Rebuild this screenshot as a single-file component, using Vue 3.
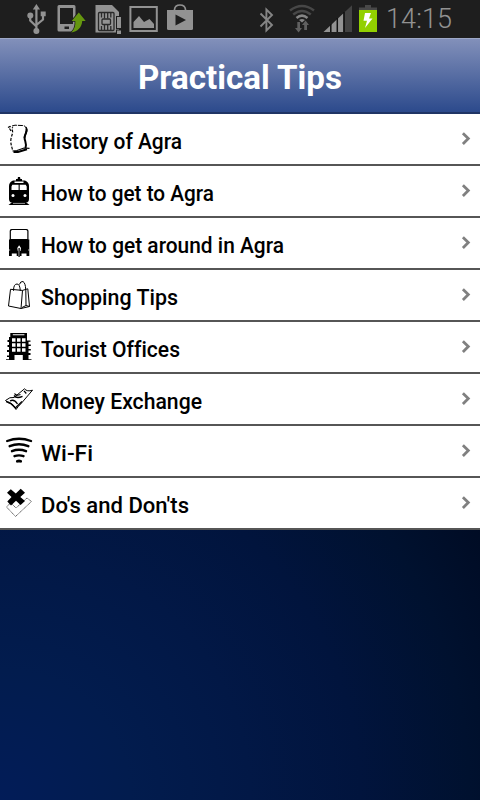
<script setup>
const items = [
  { icon: 'history', label: 'History of Agra', width: 141 },
  { icon: 'train', label: 'How to get to Agra', width: 173 },
  { icon: 'rickshaw', label: 'How to get around in Agra', width: 243 },
  { icon: 'shopping', label: 'Shopping Tips', width: 137 },
  { icon: 'office', label: 'Tourist Offices', width: 139 },
  { icon: 'money', label: 'Money Exchange', width: 161 },
  { icon: 'wifi', label: 'Wi-Fi', width: 52 },
  { icon: 'dos', label: "Do's and Don'ts", width: 148 },
]
</script>

<template>
  <div class="screen">
    <div class="status">
      <div class="group left">
        <svg class="usb" width="20" height="38" viewBox="27 0 20 38">
          <g fill="none" stroke="#929292" stroke-width="2.2">
            <path d="M36.4 8V31M30.2 16V20.5L36.4 26.5M43 14V19.5L36.4 25" />
          </g>
          <path d="M36.4 4L40 9.5H32.8ZM40.7 11.5H45.7V16.3H40.7Z" fill="#929292" />
          <circle cx="30.3" cy="15.5" r="3" fill="#929292" />
          <circle cx="36.4" cy="31" r="3" fill="#929292" />
        </svg>
        <svg width="30" height="38" viewBox="57 0 30 38">
          <path fill="#929292" fill-rule="evenodd" d="M59 5H74Q75.5 5 75.5 6.5V30Q75.5 31.5 74 31.5H59Q57.5 31.5 57.5 30V6.5Q57.5 5 59 5ZM60 8V24H73V8ZM64.5 26.5V29H69V26.5Z" />
          <path d="M78.8 12.5L85.7 21H82.2C82 27 77.5 32 71.3 32.5C74.5 29.5 75.7 25.5 75.3 21H71.7Z" fill="#65960f" stroke="#1e1e1e" stroke-width="1.6" paint-order="stroke" />
        </svg>
        <svg class="sim" width="27" height="38" viewBox="95 0 27 38">
          <path d="M95.5 5H112L119 12V32.5H95.5Z" fill="#929292" />
          <g fill="none" stroke="#292929" stroke-width="1.3">
            <rect x="98.5" y="12.5" width="15.5" height="18" rx="1" />
            <rect x="102" y="19" width="8.5" height="5.5" rx="1" />
            <path d="M101.5 13V17.5M104.5 13V18.5M107.7 13V18.5M110.8 13V17.5M101.5 30V26M104.5 30V25M107.7 30V25M110.8 30V26" />
          </g>
          <path d="M117 17H121V28H117ZM117 30.5H121V34H117Z" fill="#929292" stroke="#1e1e1e" stroke-width="2" paint-order="stroke" />
        </svg>
        <svg width="30" height="38" viewBox="129 0 30 38">
          <rect x="130.4" y="7" width="26.4" height="24" fill="none" stroke="#929292" stroke-width="2" />
          <path d="M133.5 28V22L139 16L144 22L149.5 19L154 24V28Z" fill="#929292" />
        </svg>
        <svg width="27" height="38" viewBox="167 0 27 38">
          <path d="M174.5 11V9.5Q175 5 180 5T185.5 9.5V11" fill="none" stroke="#929292" stroke-width="1.7" />
          <path d="M167 10H193V28.5Q193 30 191.5 30H168.5Q167 30 167 28.5Z" fill="#929292" />
          <path d="M175.5 14.5L186 20L175.5 25.5Z" fill="#1e1e1e" />
        </svg>
      </div>
      <div class="group right">
        <svg width="16" height="38" viewBox="259 0 16 38">
          <path d="M260.5 13.5L272 25L266.4 30.5V9.5L272 15L260.5 26.5" fill="none" stroke="#858585" stroke-width="1.9" />
        </svg>
        <svg width="28" height="38" viewBox="288 0 28 38">
          <g fill="none" stroke-width="2.5">
            <path d="M290 10.5Q302 1.5 314 10.5" stroke="#474747" />
            <path d="M293.2 14.5Q302 7.5 310.8 14.5" stroke="#474747" />
            <path d="M296.5 18Q302 13.3 307.5 18" stroke="#858585" />
          </g>
          <path d="M299 20Q302 18 305 20L302 22.5Z" fill="#858585" />
          <path d="M297.3 22H300V28H302L298.6 32.5L295 28H297.3ZM304.2 30V25H302L305.6 20.5L309 25H307V30Z" fill="#606060" />
        </svg>
        <svg class="signal" width="30" height="38" viewBox="323 0 30 38">
          <path d="M323.5 32L343.5 13.2V32Z" fill="#929292" />
          <path d="M344.5 12.3L352 5.2V32H344.5Z" fill="#434343" />
          <path d="M330.8 24V32M337.3 18V32M344 12V32" stroke="#111" stroke-width="1.5" />
        </svg>
        <svg class="battery" width="19" height="38" viewBox="359 0 19 38">
          <path d="M365 5H371V7.5H377V10H359V7.5H365Z" fill="#484848" />
          <path d="M359 10H377V32H359Z" fill="#92d000" />
          <path d="M365 13H371L369 18.5H372.5L365 28L367 20.8H363.5Z" fill="#fff" />
        </svg>
        <svg class="clock" width="66" height="38" viewBox="386 0 66 38">
          <text x="386" y="28" textLength="66" lengthAdjust="spacing">14:15</text>
        </svg>
      </div>
    </div>

    <header class="header">
      <svg width="204" height="50" viewBox="0 0 204 50">
        <text class="title" x="0" y="38" textLength="204" lengthAdjust="spacingAndGlyphs">Practical Tips</text>
      </svg>
    </header>

    <ul class="list">
      <li v-for="item in items" :key="item.icon" class="row">
        <svg class="icon" width="40" height="50" viewBox="0 0 40 50">
          <g v-if="item.icon === 'history'" fill="none" stroke="#000">
            <path d="M12 12L15 11.2L24 11.6L26 13.5" stroke-width="1" stroke-dasharray="5 1" />
            <path d="M26 13C28.5 18 24.3 20 24.4 24" stroke-width="1.5" />
            <path d="M26.5 15C27.5 18 24.6 20 24.6 24C24.6 27 27 29 25.5 34" stroke-width="2" />
            <path d="M8 13.5L10 12.5L13 14M9.5 14.5L11 17M12 15.5C14 19 10.7 22 10.8 27C10.8 31 12 33 12.8 37" stroke-width="1.2" stroke-dasharray="3 1.4" />
            <path d="M12.5 37L17 36.5L24 34L29.5 34.3" stroke-width="1.2" />
            <path d="M13.5 38L18 37.9L27 35.3" stroke-width="2" />
          </g>
          <g v-else-if="item.icon === 'train'">
            <path d="M18 11H20V13H22V14.5H25Q29 16 29 20V33Q29 36.5 25.5 37L28 38.5H10L12.5 37Q9 36.5 9 33V20Q9 16 13 14.5H16V13H18Z" />
            <path d="M14.5 15.5H23.5V17H14.5ZM12.3 18.8H18.6V24H11.5V20.5ZM19.7 18.8H25.7L26.7 20.5V24H19.7Z" fill="#fff" />
            <path d="M17.7 11.6H20.3V13.5H17.7Z" />
            <circle cx="13" cy="29.5" r="1.5" fill="#fff" /><circle cx="25" cy="29.5" r="1.5" fill="#fff" />
            <path d="M11 37H27L29.5 39H8.5Z" />
            <path d="M13 37.4H25" stroke="#fff" stroke-width=".6" />
          </g>
          <g v-else-if="item.icon === 'rickshaw'">
            <path d="M11.5 11H26.5Q28.5 11 28.5 13V21.5H29.3V38H26.5V35.5H21.5V38H20V31H18.2V38H16.7V35.5H11.8V38H9V21.5H9.7V13Q9.7 11 11.5 11Z" />
            <path d="M12 12H26.3L27.3 13V21H10.9V13Z" fill="#fff" />
            <path d="M19.1 27.2L21 30L20.5 33H17.8L17.3 30Z" fill="#fff" />
            <path d="M19.1 30V39" stroke="#000" stroke-width="1.3" />
            <path d="M9 32H10.2M28 32H29.3" stroke="#fff" stroke-width=".7" />
          </g>
          <g v-else-if="item.icon === 'shopping'" fill="none" stroke="#000" stroke-width="1">
            <path d="M10.5 19.3L22.5 20.4L21 38.5L8.5 36ZM22.5 20.4L27.8 18.8L29.5 36.5L21 38.5M25.8 20L26 35.5L29.5 36.5M26 35.5L22 37.5" />
            <path d="M13.5 20.8Q13.5 14 17 14Q20 14 20.3 21M19.4 14.5Q20.5 11 23 11.5Q25.5 13 25.7 19.5" />
          </g>
          <g v-else-if="item.icon === 'office'">
            <path d="M10.3 11H27V38H6V37.2H9V35H7V33.5H9V30H7V28H9V25H7.5V23H9V20H7.5V18H9V15H10.3ZM27 18.6H30.5V19.8H28.5V22.5H30.8V24H28.5V27H30.8V28.5H28.5V31H30.5V33H28.5V37.2H31.5V38H27Z" />
            <path fill="#fff" d="M12.8 12.2H24.4V13.3H12.8ZM12 16.2H15.5V19.7H12ZM17 16.2H20.5V19.7H17ZM22 16.2H25.5V19.7H22ZM12 21.2H15.5V24.7H12ZM17 21.2H20.5V24.7H17ZM22 21.2H25.5V24.7H22ZM12 26.2H15.5V29.7H12ZM17 26.2H20.5V29.7H17ZM22 26.2H25.5V29.7H22ZM14.5 33H22.8V38H14.5Z" />
          </g>
          <g v-else-if="item.icon === 'money'" fill="none" stroke="#000" stroke-linejoin="round">
            <path d="M5.5 26.5Q10 22.5 14 23.5L24.5 14.8Q27 18 32.5 16.2L22 28.5Q18 32.5 16 35.5Q14 31 11.5 29.5Q8 29.5 5.5 26.5Z" stroke-width="1" />
            <path d="M6 27.5Q11 28.5 15.3 34L22 27.5M10 27Q14 24.5 17.5 30" stroke-width="1.3" />
            <path d="M14.5 19.5Q16 22.3 20.5 20.5M14 21.5Q16.5 25 22.5 22.3M24 16.8L26.3 19.5" stroke-width="1.3" />
          </g>
          <g v-else-if="item.icon === 'wifi'" fill="none" stroke="#000" stroke-width="2.4" stroke-linecap="round">
            <path d="M7.2 15Q19 10.5 31 15M9.7 20.2Q19 16.4 28.3 20.2M12 25.2Q19 22.4 26 25.2M14.5 30.2Q19 28.5 23.5 30.2" />
            <path d="M17.3 35.3Q19 34.7 20.7 35.3" stroke-width="2.8" />
          </g>
          <g v-else>
            <path d="M12 23.5L6.5 29L15.5 38.5L31.5 23.5L27 20L16 30L11 25" fill="none" stroke="#333" stroke-width=".8" stroke-dasharray="1.3 .5" />
            <path d="M10.8 11.2L15.8 15.4L20.7 10.8L25 14.7L20.3 19L25 23L20.6 27L16 22.8L11 27.4L7.3 23.5L11.5 19L7 14.8Z" />
          </g>
        </svg>
        <svg class="label" width="260" height="50" viewBox="0 0 260 50">
          <text x="0" y="35" :textLength="item.width" lengthAdjust="spacingAndGlyphs">{{ item.label }}</text>
        </svg>
        <svg class="chevron" width="10" height="50" viewBox="0 0 10 50">
          <path d="M1.9 19.3L7.3 24.6L1.9 29.9" fill="none" stroke="#808080" stroke-width="2.8" />
        </svg>
      </li>
    </ul>
  </div>
</template>

<style>
body { margin: 0; overflow: hidden; }
</style>

<style scoped>
.screen {
  width: 480px;
  height: 800px;
  overflow: hidden;
  font-family: Roboto, "Liberation Sans", sans-serif;
  font-variant-ligatures: none;
  background: radial-gradient(circle at 0 800px, #021c58 0, #021c4e 130px, #021846 250px, #01143d 360px, #00112f 470px, #000b23 560px);
}
svg { display: block; flex: none; }
.status {
  height: 38px;
  display: flex;
  justify-content: space-between;
  padding: 0 28px 0 27px;
  box-sizing: border-box;
  background: #1e1e1e;
}
.group { display: flex; }
.left { gap: 8px; }
.left .usb { margin-right: 2px; }
.left .sim { margin-right: -1px; }
.right { gap: 7px; }
.right svg:first-child { margin-right: 6px; }
.right .signal { margin-right: -1px; }
.right .battery { margin-right: 1px; }
.clock { overflow: visible; }
.clock text { font-size: 27px; fill: #929292; font-weight: 300; }
.header {
  height: 76px;
  box-sizing: border-box;
  border-top: 1px solid #9da8c7;
  border-bottom: 2px solid #203565;
  background: linear-gradient(#8290ba, #2c4a8c);
  display: flex;
  justify-content: center;
  align-items: flex-start;
  padding-top: 12px;
}
.title { font-size: 33px; font-weight: 700; fill: #fff; }
.list { margin: 0; padding: 0; list-style: none; }
.row {
  height: 52px;
  box-sizing: border-box;
  display: flex;
  background: #fff;
  border-bottom: 2px solid #565656;
}
.label { margin-left: 1px; }
.label text { font-size: 21.5px; font-weight: 500; fill: #000; }
.chevron { margin-left: auto; margin-right: 9px; }
</style>
